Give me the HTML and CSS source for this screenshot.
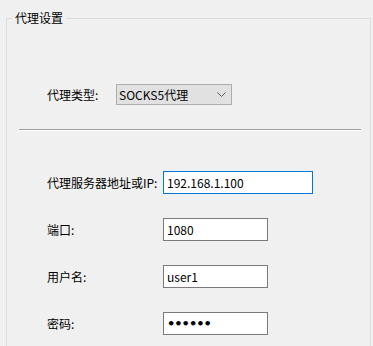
FILE: index.html
```html
<!DOCTYPE html>
<html lang="zh-CN">
<head>
    <meta charset="UTF-8">
    <meta name="viewport" content="width=device-width, initial-scale=1.0">
    <title>代理设置</title>
    <link rel="stylesheet" href="styles.css">
</head>
<body>
    <fieldset class="group">
        <legend class="group-title">代理设置</legend>

        <!-- Proxy type -->
        <div class="type-row">
            <label class="label">代理类型:</label>
            <div class="combo">
                <span>SOCKS5代理</span>
                <svg class="chevron" width="9" height="5" viewBox="0 0 9 5">
                    <polyline points="0.5,0.5 4.5,4.5 8.5,0.5" fill="none" stroke="#5a5a5a" stroke-width="1"/>
                </svg>
            </div>
        </div>

        <div class="separator"></div>

        <!-- Server fields -->
        <div class="fields">
            <label class="label">代理服务器地址或IP:</label>
            <input class="field wide focused" type="text" value="192.168.1.100" autofocus>

            <label class="label">端口:</label>
            <input class="field" type="text" value="1080">

            <label class="label">用户名:</label>
            <input class="field" type="text" value="user1">

            <label class="label">密码:</label>
            <input class="field secret" type="password" value="123456">
        </div>
    </fieldset>
</body>
</html>
```

FILE: styles.css
```css
html,
body {
    height: 100%;
    overflow: hidden;
}

body {
    margin: 0;
    padding: 10px 2px 0 6px;
    box-sizing: border-box;
    background-color: #f0f0f0;
    font-family: "Noto Sans CJK SC", "Microsoft YaHei", sans-serif;
    font-size: 12px;
    color: #000;
}

.group {
    margin: 0;
    padding: 0 9px 40px 40px;
    border: 1px solid #dcdcdc;
    min-width: 0;
}

.group-title {
    padding: 0 3px;
    margin-left: -35px;
    line-height: 16px;
}

.type-row {
    display: flex;
    align-items: center;
    margin-top: 58px;
}

.type-row .label {
    width: 69px;
}

.combo {
    width: 107px;
    height: 19px;
    border: 1px solid #adadad;
    background: #e1e1e1;
    display: flex;
    align-items: center;
    justify-content: space-between;
    padding: 0 5px 0 2px;
}

.chevron {
    display: block;
}

.separator {
    margin: 24px 0 0 -28px;
    border-top: 1px solid #a0a0a0;
    border-bottom: 1px solid #fff;
}

.fields {
    display: grid;
    grid-template-columns: 116px auto;
    align-items: center;
    row-gap: 24px;
    margin-top: 40px;
}

.field {
    width: 105px;
    height: 23px;
    box-sizing: border-box;
    border: 1px solid #7a7a7a;
    background: #fff;
    padding: 0 3px;
    font-family: inherit;
    font-size: 12px;
    color: #000;
    outline: none;
    justify-self: start;
}

.field.wide {
    width: 150px;
}

.field.focused {
    border-color: #0078d7;
    caret-color: #000;
}

.field.secret {
    font-family: "DejaVu Sans", sans-serif;
    font-size: 13px;
    font-weight: bold;
    letter-spacing: -1px;
}
```
